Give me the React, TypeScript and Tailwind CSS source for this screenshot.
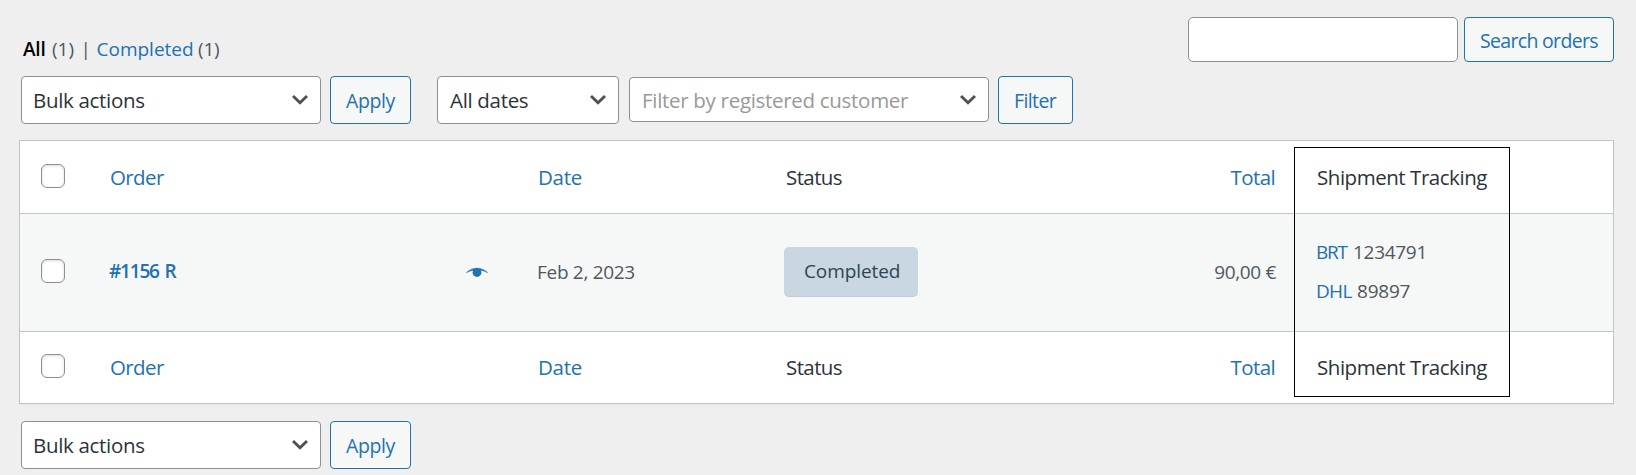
import type { ReactNode } from 'react';

const btn = 'flex items-center rounded-[4px] border border-[#2271b1] bg-[#f6f7f7] text-[19.5px] text-[#2271b1]';
const box = 'flex items-center justify-between rounded-[4px] border border-[#8c8f94] bg-white text-[20.5px] text-[#2c3338]';
const row = 'grid grid-cols-[90px_354px_73px_246px_493px_1fr] items-center';

function Chevron() {
  return (
    <svg className="h-4 w-4 text-[#50504f]" viewBox="0 0 16 16" fill="none" stroke="currentColor" strokeWidth="2.9">
      <path d="M1 4l7 6.8L15 4" />
    </svg>
  );
}

function Checkbox() {
  return (
    <span
      role="checkbox"
      aria-checked="false"
      className="ml-[21px] block h-6 w-6 rounded-[6px] border border-[#8c8f94] bg-white shadow-[inset_0_1px_3px_rgba(0,0,0,0.15)]"
    />
  );
}

function Select({ children, className }: { children: ReactNode; className: string }) {
  return (
    <div className={`${box} ${className}`}>
      <span className="pt-px">{children}</span>
      <Chevron />
    </div>
  );
}

function BulkActions() {
  return (
    <>
      <Select className="h-12 w-[300px] pr-3 pl-[11px] tracking-[-0.32px]">Bulk actions</Select>
      <button className={`${btn} ml-[9px] h-12 w-[81px] pt-px pl-[15px] tracking-[-0.4px]`}>Apply</button>
    </>
  );
}

function Headings({ className, checkClass }: { className: string; checkClass: string }) {
  return (
    <div className={`${row} ${className} bg-white text-[20.5px] text-[#2c3338]`}>
      <div className={`self-start ${checkClass}`}>
        <Checkbox />
      </div>
      <span className="tracking-[-0.6px] text-[#2271b1]">Order</span>
      <span />
      <span className="pl-[1px] tracking-[-0.3px] text-[#2271b1]">Date</span>
      <div className="flex justify-between pl-[3px]">
        <span className="tracking-[-0.6px]">Status</span>
        <span className="pr-px tracking-[-0.6px] text-[#2271b1]">Total</span>
      </div>
      <span className="pl-[41px] tracking-[-0.46px]">Shipment Tracking</span>
    </div>
  );
}

export default function App() {
  return (
    <div className="h-[475px] w-[1636px] overflow-hidden bg-[#efefef] font-['Open_Sans',sans-serif] whitespace-nowrap">
      <div className="flex h-[76px] justify-between pr-[22px] pl-[23px]">
        <div className="flex h-7 pt-[35px] text-[19px] leading-7 text-[#50575e]">
          <span className="w-7 font-semibold tracking-[-0.2px] text-black">All</span>
          <span className="w-[29.5px] pl-px">(1)</span>
          <span className="w-[16px]">|</span>
          <span className="w-[101.5px] text-[#2271b1]">Completed</span>
          <span className="tracking-[-0.2px]">(1)</span>
        </div>
        <div className="flex h-[45px] gap-[6px] pt-[17px]">
          <input className="h-[45px] w-[270px] rounded-[5px] border border-[#8c8f94] bg-white" />
          <button className={`${btn} h-[45px] w-[150px] pt-[2px] pl-[15px] tracking-[-0.68px]`}>Search orders</button>
        </div>
      </div>

      <div className="flex h-16 items-start pl-[21px]">
        <BulkActions />
        <Select className="ml-[26px] h-12 w-[182px] pr-3 pl-[12px] tracking-[-0.32px]">All dates</Select>
        <div className={`${box} mt-px ml-[10px] h-[45px] w-[360px] pr-3 pl-3 tracking-[-0.3px]`}>
          <span className="pt-px text-[#999]">Filter by registered customer</span>
          <Chevron />
        </div>
        <button className={`${btn} ml-[9px] h-12 w-[75px] pt-px pl-[15px] tracking-[-0.6px]`}>Filter</button>
      </div>

      <div className="relative ml-[19px] h-[264px] w-[1595px] border border-[#c3c4c7] bg-white shadow-[0_1px_1px_rgba(0,0,0,0.04)]">
        <Headings className="h-[72px]" checkClass="pt-[23px]" />
        <div className={`${row} h-[119px] border-y border-[#c3c4c7] bg-[#f6f7f7] text-[19px] text-[#50575e]`}>
          <div className="self-start pt-[45px]">
            <Checkbox />
          </div>
          <span className="-ml-px -translate-y-[1.5px] font-semibold tracking-[-1.2px] text-[#2271b1] [word-spacing:2px]">#1156 R</span>
          <svg className="ml-[2px] h-[10px] w-[22px] -translate-y-[0.5px]" viewBox="0 0 22 10">
            <path d="M.4 5.2C6-.9 16-.9 21.6 5.2C16 1.7 6 1.7.4 5.2z" fill="#2271b1" stroke="#2271b1" strokeWidth=".5" />
            <circle cx="11" cy="5" r="4.4" fill="#2271b1" />
          </svg>
          <span className="tracking-[-0.3px]">Feb 2, 2023</span>
          <div className="flex items-center justify-between">
            <span className="ml-px flex h-[50px] w-[134px] -translate-y-px items-center rounded-[5px] border-b border-black/5 bg-[#c8d7e1] pl-[20px] tracking-[-0.1px] text-[#2e4453]">
              Completed
            </span>
            <span className="tracking-[-0.35px]">90,00 €</span>
          </div>
          <div className="-translate-y-px pl-[40px] leading-[39px]">
            <div>
              <span className="inline-block w-[37px] tracking-[-1.2px] text-[#2271b1]">BRT</span>
              <span className="tracking-[-0.3px]">1234791</span>
            </div>
            <div>
              <span className="inline-block w-[41px] tracking-[-0.7px] text-[#2271b1]">DHL</span>
              <span className="tracking-[-0.22px]">89897</span>
            </div>
          </div>
        </div>
        <Headings className="h-[71px]" checkClass="pt-[22px]" />
        <div className="absolute top-[6px] left-[1274px] h-[250px] w-[216px] border border-black" />
      </div>

      <div className="flex pt-[17px] pl-[21px]">
        <BulkActions />
      </div>
    </div>
  );
}
